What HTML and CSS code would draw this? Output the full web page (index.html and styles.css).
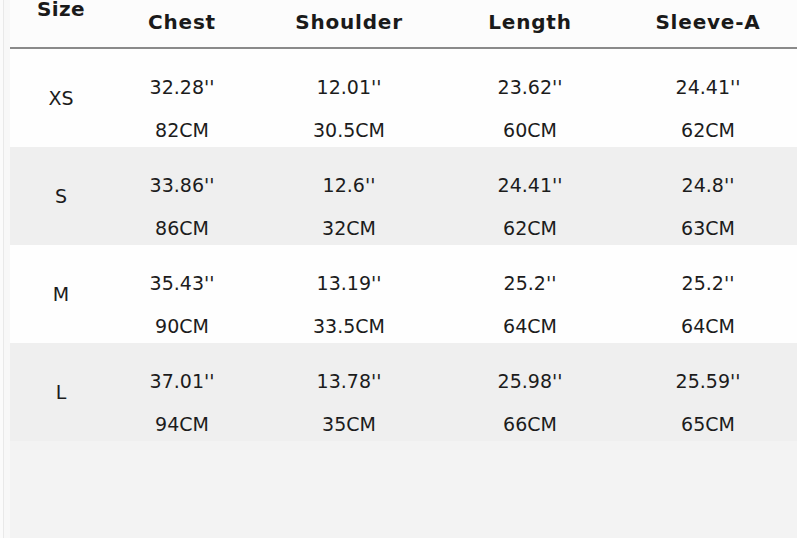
FILE: index.html
```html
<!DOCTYPE html>
<html lang="en">
<head>
<meta charset="utf-8">
<title>Size Chart</title>
<link rel="stylesheet" href="styles.css">
</head>
<body>
<div class="page">
  <div class="edge"></div>
  <div class="chart">
    <div class="head">
      <div class="hcell size-h">Size</div>
      <div class="hcell">Chest</div>
      <div class="hcell">Shoulder</div>
      <div class="hcell">Length</div>
      <div class="hcell">Sleeve-A</div>
    </div>
    <div class="row">
      <div class="label">XS</div>
      <div class="cell"><span>32.28''</span><span>82CM</span></div>
      <div class="cell"><span>12.01''</span><span>30.5CM</span></div>
      <div class="cell"><span>23.62''</span><span>60CM</span></div>
      <div class="cell"><span>24.41''</span><span>62CM</span></div>
    </div>
    <div class="row alt">
      <div class="label">S</div>
      <div class="cell"><span>33.86''</span><span>86CM</span></div>
      <div class="cell"><span>12.6''</span><span>32CM</span></div>
      <div class="cell"><span>24.41''</span><span>62CM</span></div>
      <div class="cell"><span>24.8''</span><span>63CM</span></div>
    </div>
    <div class="row">
      <div class="label">M</div>
      <div class="cell"><span>35.43''</span><span>90CM</span></div>
      <div class="cell"><span>13.19''</span><span>33.5CM</span></div>
      <div class="cell"><span>25.2''</span><span>64CM</span></div>
      <div class="cell"><span>25.2''</span><span>64CM</span></div>
    </div>
    <div class="row alt">
      <div class="label">L</div>
      <div class="cell"><span>37.01''</span><span>94CM</span></div>
      <div class="cell"><span>13.78''</span><span>35CM</span></div>
      <div class="cell"><span>25.98''</span><span>66CM</span></div>
      <div class="cell"><span>25.59''</span><span>65CM</span></div>
    </div>
    <div class="rest"></div>
  </div>
</div>
</body>
</html>
```
FILE: styles.css
```css
html, body {
  margin: 0;
  padding: 0;
  width: 797px;
  height: 538px;
  overflow: hidden;
  background: #fbfbfb;
  font-family: "DejaVu Sans", Verdana, sans-serif;
  color: #1c1c1c;
}

.page {
  display: flex;
  height: 538px;
}

.edge {
  width: 10px;
  flex: none;
  background: linear-gradient(to right, #fbfbfb 0 3px, #e9e9e9 3px 4px, #f8f8f8 4px 10px);
}

.chart {
  width: 792px;
  flex: none;
  display: flex;
  flex-direction: column;
}

.head,
.row {
  display: grid;
  grid-template-columns: 102px 140px 194px 168px 188px;
}

.head {
  height: 47px;
  border-bottom: 2px solid #8a8a8a;
  background: #fcfcfc;
}

.hcell {
  font-weight: bold;
  font-size: 20px;
  letter-spacing: 0.8px;
  text-align: center;
  padding-top: 10px;
  color: #1a1a1a;
}

.hcell.size-h {
  padding-top: 0;
  line-height: 19px;
  letter-spacing: 0.4px;
}

.row {
  height: 98px;
  background: #fefefe;
}

.row.alt {
  background: #efefef;
}

.label {
  font-size: 19px;
  display: flex;
  align-items: center;
  justify-content: center;
}

.cell {
  display: flex;
  flex-direction: column;
  align-items: center;
  font-size: 19px;
  padding-top: 27px;
  gap: 20px;
  line-height: 23px;
}

.rest {
  flex: 1;
  background: #f3f3f3;
}
```
